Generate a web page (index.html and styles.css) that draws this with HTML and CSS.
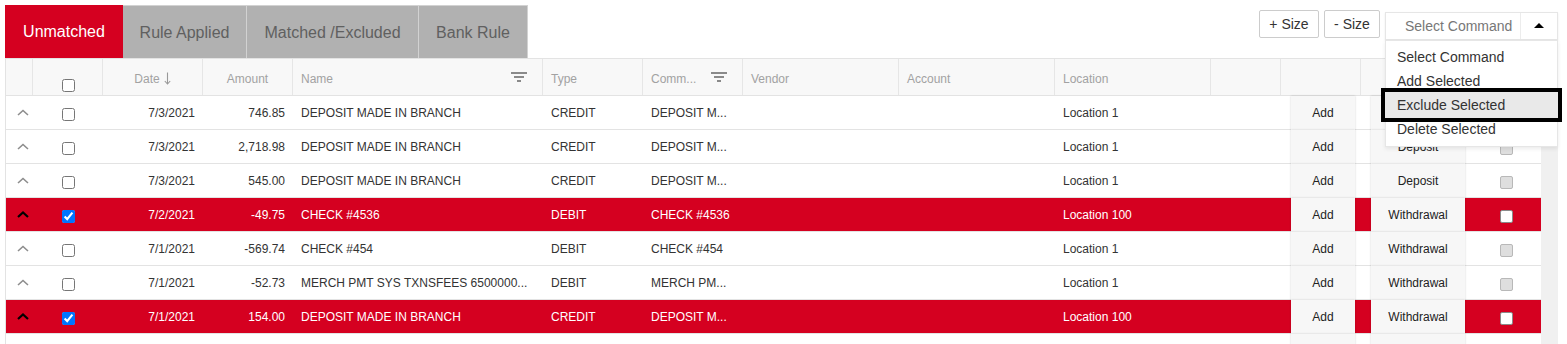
FILE: index.html
```html
<!DOCTYPE html>
<html lang="en">
<head>
    <meta charset="UTF-8">
    <title>Bank Transactions</title>
    <link rel="stylesheet" href="styles.css">
</head>
<body>
<div class="page">
    <div class="topbar">
        <div class="tabs">
            <div class="tab tab-unmatched active">Unmatched</div>
            <div class="tab tab-rule">Rule Applied</div>
            <div class="tab tab-matched">Matched /Excluded</div>
            <div class="tab tab-bank">Bank Rule</div>
        </div>
        <div class="tools">
            <button class="size-btn size-plus">+ Size</button>
            <button class="size-btn size-minus">- Size</button>
            <div class="command">
                <div class="command-box">
                    <span class="command-label">Select Command</span>
                    <span class="command-arrow"><span class="caret"></span></span>
                </div>
                <ul class="command-menu">
                    <li>Select Command</li>
                    <li>Add Selected</li>
                    <li class="active">Exclude Selected</li>
                    <li>Delete Selected</li>
                </ul>
            </div>
        </div>
    </div>

    <div class="grid">
        <div class="grid-head">
            <div class="hcell"></div>
            <div class="hcell hcheck"><input type="checkbox"></div>
            <div class="hcell center">Date <svg class="sort" width="7" height="13" viewBox="0 0 7 13"><path d="M3.5 0.5 V12 M0.8 9 L3.5 12 L6.2 9"/></svg></div>
            <div class="hcell center">Amount</div>
            <div class="hcell">Name <span class="filter"><i></i><i></i><i></i></span></div>
            <div class="hcell">Type</div>
            <div class="hcell">Comm... <span class="filter"><i></i><i></i><i></i></span></div>
            <div class="hcell">Vendor</div>
            <div class="hcell">Account</div>
            <div class="hcell">Location</div>
            <div class="hcell"></div>
            <div class="hcell"></div>
            <div class="hcell"></div>
            <div class="hcell"></div>
            <div class="hcell last"></div>
        </div>
        <div class="grid-body">
            <div class="rows">
                <div class="row">
                    <div class="cell expand"><svg width="12" height="7" viewBox="0 0 12 7"><path d="M1 6 L6 1.5 L11 6"/></svg></div>
                    <div class="cell check"><input type="checkbox"></div>
                    <div class="cell num">7/3/2021</div>
                    <div class="cell num">746.85</div>
                    <div class="cell">DEPOSIT MADE IN BRANCH</div>
                    <div class="cell">CREDIT</div>
                    <div class="cell">DEPOSIT M...</div>
                    <div class="cell"></div>
                    <div class="cell"></div>
                    <div class="cell">Location 1</div>
                    <div class="cell"></div>
                    <div class="cell btn-cell"><span class="row-btn add">Add</span></div>
                    <div class="cell btn-cell"><span class="row-btn kind">Deposit</span></div>
                    <div class="cell pick-cell"><span class="pick"></span></div>
                </div>
                <div class="row">
                    <div class="cell expand"><svg width="12" height="7" viewBox="0 0 12 7"><path d="M1 6 L6 1.5 L11 6"/></svg></div>
                    <div class="cell check"><input type="checkbox"></div>
                    <div class="cell num">7/3/2021</div>
                    <div class="cell num">2,718.98</div>
                    <div class="cell">DEPOSIT MADE IN BRANCH</div>
                    <div class="cell">CREDIT</div>
                    <div class="cell">DEPOSIT M...</div>
                    <div class="cell"></div>
                    <div class="cell"></div>
                    <div class="cell">Location 1</div>
                    <div class="cell"></div>
                    <div class="cell btn-cell"><span class="row-btn add">Add</span></div>
                    <div class="cell btn-cell"><span class="row-btn kind">Deposit</span></div>
                    <div class="cell pick-cell"><span class="pick"></span></div>
                </div>
                <div class="row">
                    <div class="cell expand"><svg width="12" height="7" viewBox="0 0 12 7"><path d="M1 6 L6 1.5 L11 6"/></svg></div>
                    <div class="cell check"><input type="checkbox"></div>
                    <div class="cell num">7/3/2021</div>
                    <div class="cell num">545.00</div>
                    <div class="cell">DEPOSIT MADE IN BRANCH</div>
                    <div class="cell">CREDIT</div>
                    <div class="cell">DEPOSIT M...</div>
                    <div class="cell"></div>
                    <div class="cell"></div>
                    <div class="cell">Location 1</div>
                    <div class="cell"></div>
                    <div class="cell btn-cell"><span class="row-btn add">Add</span></div>
                    <div class="cell btn-cell"><span class="row-btn kind">Deposit</span></div>
                    <div class="cell pick-cell"><span class="pick"></span></div>
                </div>
                <div class="row selected">
                    <div class="cell expand"><svg width="12" height="7" viewBox="0 0 12 7"><path d="M1 6 L6 1.5 L11 6"/></svg></div>
                    <div class="cell check"><input type="checkbox" checked></div>
                    <div class="cell num">7/2/2021</div>
                    <div class="cell num">-49.75</div>
                    <div class="cell">CHECK #4536</div>
                    <div class="cell">DEBIT</div>
                    <div class="cell">CHECK #4536</div>
                    <div class="cell"></div>
                    <div class="cell"></div>
                    <div class="cell">Location 100</div>
                    <div class="cell"></div>
                    <div class="cell btn-cell"><span class="row-btn add">Add</span></div>
                    <div class="cell btn-cell"><span class="row-btn kind">Withdrawal</span></div>
                    <div class="cell pick-cell"><span class="pick"></span></div>
                </div>
                <div class="row">
                    <div class="cell expand"><svg width="12" height="7" viewBox="0 0 12 7"><path d="M1 6 L6 1.5 L11 6"/></svg></div>
                    <div class="cell check"><input type="checkbox"></div>
                    <div class="cell num">7/1/2021</div>
                    <div class="cell num">-569.74</div>
                    <div class="cell">CHECK #454</div>
                    <div class="cell">DEBIT</div>
                    <div class="cell">CHECK #454</div>
                    <div class="cell"></div>
                    <div class="cell"></div>
                    <div class="cell">Location 1</div>
                    <div class="cell"></div>
                    <div class="cell btn-cell"><span class="row-btn add">Add</span></div>
                    <div class="cell btn-cell"><span class="row-btn kind">Withdrawal</span></div>
                    <div class="cell pick-cell"><span class="pick"></span></div>
                </div>
                <div class="row">
                    <div class="cell expand"><svg width="12" height="7" viewBox="0 0 12 7"><path d="M1 6 L6 1.5 L11 6"/></svg></div>
                    <div class="cell check"><input type="checkbox"></div>
                    <div class="cell num">7/1/2021</div>
                    <div class="cell num">-52.73</div>
                    <div class="cell">MERCH PMT SYS TXNSFEES 6500000...</div>
                    <div class="cell">DEBIT</div>
                    <div class="cell">MERCH PM...</div>
                    <div class="cell"></div>
                    <div class="cell"></div>
                    <div class="cell">Location 1</div>
                    <div class="cell"></div>
                    <div class="cell btn-cell"><span class="row-btn add">Add</span></div>
                    <div class="cell btn-cell"><span class="row-btn kind">Withdrawal</span></div>
                    <div class="cell pick-cell"><span class="pick"></span></div>
                </div>
                <div class="row selected">
                    <div class="cell expand"><svg width="12" height="7" viewBox="0 0 12 7"><path d="M1 6 L6 1.5 L11 6"/></svg></div>
                    <div class="cell check"><input type="checkbox" checked></div>
                    <div class="cell num">7/1/2021</div>
                    <div class="cell num">154.00</div>
                    <div class="cell">DEPOSIT MADE IN BRANCH</div>
                    <div class="cell">CREDIT</div>
                    <div class="cell">DEPOSIT M...</div>
                    <div class="cell"></div>
                    <div class="cell"></div>
                    <div class="cell">Location 100</div>
                    <div class="cell"></div>
                    <div class="cell btn-cell"><span class="row-btn add">Add</span></div>
                    <div class="cell btn-cell"><span class="row-btn kind">Withdrawal</span></div>
                    <div class="cell pick-cell"><span class="pick"></span></div>
                </div>
                <!-- next row is only partly scrolled into view -->
                <div class="row">
                    <div class="cell expand"></div>
                    <div class="cell check"></div>
                    <div class="cell num"></div>
                    <div class="cell num"></div>
                    <div class="cell"></div>
                    <div class="cell"></div>
                    <div class="cell"></div>
                    <div class="cell"></div>
                    <div class="cell"></div>
                    <div class="cell"></div>
                    <div class="cell"></div>
                    <div class="cell btn-cell"><span class="row-btn add"></span></div>
                    <div class="cell btn-cell"><span class="row-btn kind"></span></div>
                    <div class="cell pick-cell"></div>
                </div>
            </div>
            <div class="vscroll"></div>
        </div>
    </div>
</div>
</body>
</html>
```

FILE: styles.css
```css
body {
    margin: 0;
    font-family: "Liberation Sans", Arial, sans-serif;
    background-color: #fff;
    overflow: hidden;
}
.page {
    padding: 5px 0 0 5px;
}

/* top bar */
.topbar {
    display: flex;
    justify-content: space-between;
    align-items: flex-start;
    padding-right: 9px;
    height: 53px;
}
.tabs {
    display: flex;
    height: 53px;
}
.tab {
    display: flex;
    align-items: center;
    justify-content: center;
    box-sizing: border-box;
    padding-top: 1px;
    font-size: 16px;
    color: #606060;
    background-color: #b1b1b1;
    border: 1px solid #d2d2d2;
    border-bottom: none;
    border-left: none;
    white-space: nowrap;
}
.tab.active {
    background-color: #d50020;
    color: #fff;
    border: none;
}
.tab-unmatched { width: 118px; }
.tab-rule { width: 124px; }
.tab-matched { width: 172px; }
.tab-bank { width: 109px; }

.tools {
    display: flex;
    gap: 5px;
}
.size-btn {
    margin-top: 5px;
    height: 28px;
    padding: 0;
    font-family: "Liberation Sans", Arial, sans-serif;
    font-size: 14px;
    color: #333;
    background-color: #fff;
    border: 1px solid #ccc;
    border-radius: 2px;
}
.size-plus { width: 60px; }
.size-minus { width: 56px; }
.command {
    position: relative;
    margin-top: 7px;
    width: 173px;
}
.command-box {
    display: flex;
    height: 28px;
    box-sizing: border-box;
    border: 1px solid #e6e6e6;
    box-shadow: 0 1px 2px rgba(0, 0, 0, 0.08);
    background-color: #fff;
}
.command-label {
    flex: 1;
    padding-left: 19px;
    line-height: 26px;
    font-size: 14px;
    color: #777;
}
.command-arrow {
    width: 36px;
    border-left: 1px solid #ececec;
    display: flex;
    align-items: center;
    justify-content: center;
}
.caret {
    width: 0;
    height: 0;
    border-left: 5px solid transparent;
    border-right: 5px solid transparent;
    border-bottom: 5px solid #000;
    margin-top: -2px;
}
.command-menu {
    position: absolute;
    top: 28px;
    left: 0;
    right: 0;
    z-index: 5;
    margin: 0;
    padding: 4px 0 5px;
    list-style: none;
    background-color: #fff;
    border: 1px solid #e6e6e6;
    box-shadow: 0 2px 4px rgba(0, 0, 0, 0.08);
}
.command-menu li {
    height: 24px;
    line-height: 24px;
    padding-left: 11px;
    font-size: 14px;
    color: #333;
}
.command-menu li.active {
    background-color: #e9e9e9;
    box-shadow: 0 0 0 1px #e9e9e9, 0 0 0 5px #000;
    position: relative;
}

/* grid */
.grid {
    width: 1553px;
    border-left: 1px solid #e3e3e3;
    box-sizing: border-box;
}
.grid-head,
.row {
    display: grid;
    grid-template-columns: 27px 70px 100px 90px 250px 100px 100px 156px 156px 156px 70px 80px 110px 70px;
}
.grid-head {
    grid-template-columns: 27px 70px 100px 90px 250px 100px 100px 156px 156px 156px 70px 80px 110px 70px 17px;
    height: 38px;
    box-sizing: border-box;
    background-color: #f8f8f8;
    border-top: 1px solid #e3e3e3;
    border-bottom: 1px solid #e3e3e3;
}
.hcell {
    display: flex;
    align-items: center;
    padding: 3px 8px 0;
    font-size: 12px;
    color: #a2a2a2;
    border-right: 1px solid #e6e6e6;
    position: relative;
}
.hcell.center {
    justify-content: center;
}
.hcell.last {
    border-right: none;
}
.sort {
    margin-left: 4px;
}
.sort path {
    fill: none;
    stroke: #999;
    stroke-width: 1.1;
}
.hcell.hcheck {
    justify-content: center;
    align-items: flex-end;
    padding: 0;
}
.hcell.hcheck input {
    margin: 0 0 3px 1px;
}
.filter {
    position: absolute;
    right: 15px;
    top: 13px;
    display: flex;
    flex-direction: column;
    align-items: center;
    gap: 2px;
}
.filter i {
    display: block;
    height: 2px;
    background-color: #8a8a8a;
}
.filter i:nth-child(1) { width: 16px; }
.filter i:nth-child(2) { width: 10px; }
.filter i:nth-child(3) { width: 4px; }

.grid-body {
    display: flex;
}
.rows {
    width: 1535px;
}
.vscroll {
    width: 17px;
    background-color: #f0f0f0;
}
.row {
    height: 34px;
    box-sizing: border-box;
    border-bottom: 1px solid #e3e3e3;
    background-color: #fff;
    font-size: 12px;
    color: #333;
}
.row.selected {
    background-color: #d50020;
    color: #fff;
}
.cell {
    display: flex;
    align-items: center;
    padding: 0 8px;
    white-space: nowrap;
    overflow: hidden;
}
.cell.num {
    justify-content: flex-end;
}
.cell.expand {
    padding: 0 0 1px 11px;
}
.expand svg path {
    fill: none;
    stroke: #8d8d8d;
    stroke-width: 1.6;
}
.row.selected .expand svg path {
    stroke: #000;
    stroke-width: 2.2;
}
.cell.check {
    justify-content: center;
    padding: 3px 0 0 1px;
}
.cell.check input {
    margin: 0;
    width: 13px;
    height: 13px;
}
.cell.btn-cell {
    padding: 0 0 0 10px;
    align-items: stretch;
    overflow: visible;
}
.row-btn {
    display: flex;
    align-items: center;
    justify-content: center;
    background-color: #f7f7f7;
    color: #222;
    box-shadow: 0 0 2px rgba(0, 0, 0, 0.18);
    margin-bottom: -1px;
}
.row-btn.add { width: 64px; }
.row-btn.kind { width: 94px; }
.cell.pick-cell {
    justify-content: center;
    padding: 3px 0 0 0;
}
.pick {
    width: 11px;
    height: 11px;
    border: 1px solid #b8b8b8;
    border-radius: 2px;
    background-color: #dedede;
}
.row.selected .pick {
    background-color: #fff;
    border-color: #8a8a8a;
}
```
